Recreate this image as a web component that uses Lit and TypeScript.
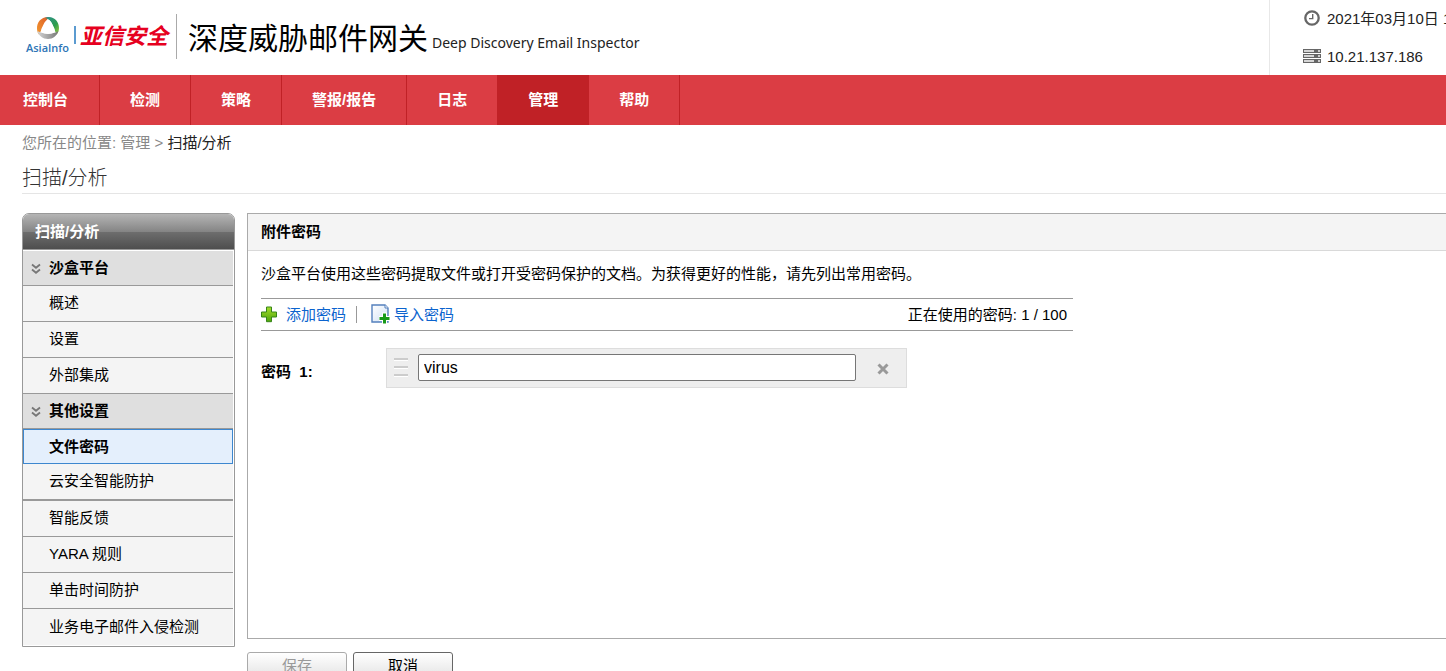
import { LitElement, html, css, svg } from "lit";
import { customElement, property, state } from "lit/decorators.js";
import { classMap } from "lit/directives/class-map.js";

const NAV = ["控制台", "检测", "策略", "警报/报告", "日志", "管理", "帮助"];

const MENU = [
  { title: "沙盒平台", items: ["概述", "设置", "外部集成"] },
  {
    title: "其他设置",
    items: ["文件密码", "云安全智能防护", "智能反馈", "YARA 规则", "单击时间防护", "业务电子邮件入侵检测"],
  },
];

@customElement("app-header")
class AppHeader extends LitElement {
  static styles = css`
    :host { display: flex; height: 75px; background: #fff; overflow: hidden; }
    .brand { display: flex; flex: 1; align-items: flex-start; padding-left: 25px; white-space: nowrap; }
    .mark { display: flex; flex-direction: column; align-items: center; width: 45px; padding-top: 16px; color: #2e75b6; font: 600 11px/16px "Open Sans", "Noto Sans", sans-serif; }
    .ring { width: 24px; height: 24px; }
    .bar { width: 2px; height: 18px; margin: 26px 4px 0 4px; background: #5b9bd0; }
    .cn { width: 89px; padding-top: 19px; color: #e60020; font: italic 700 22px/30px "Noto Sans CJK SC", sans-serif; }
    .rule { width: 1px; height: 45px; margin: 14px 11px 0 7px; background: #aaa; }
    .product { padding-top: 16px; color: #000; font: 400 30px/40px "Noto Sans CJK SC", sans-serif; }
    .en { padding: 33px 0 0 4px; color: #222; font: 400 14px/20px "Noto Sans", sans-serif; }
    .info { box-sizing: border-box; width: 177px; border-left: 1px solid #e8e8e8; padding: 8px 0 0 33px; overflow: hidden; color: #222; }
    .line { display: flex; align-items: center; height: 22px; margin-bottom: 16px; gap: 6px; white-space: nowrap; }
    .line svg { flex: none; }
  `;
  render() {
    return html`
      <div class="brand">
        <div class="mark">
          <svg class="ring" viewBox="0 0 24 24">
            <defs>
              <linearGradient id="g1" x1="1" y1="0" x2="0" y2="1"><stop offset="0" stop-color="#dc5a2a" /><stop offset="1" stop-color="#f39a2d" /></linearGradient>
              <linearGradient id="g2" x1="0" y1="0" x2="1" y2="1"><stop offset="0" stop-color="#2f8f94" /><stop offset=".6" stop-color="#2c9d4c" /><stop offset="1" stop-color="#a5cf3c" /></linearGradient>
              <linearGradient id="g3" x1="0" y1="0" x2="1" y2="0"><stop offset="0" stop-color="#d4d4d4" /><stop offset="1" stop-color="#777" /></linearGradient>
            </defs>
            <path d="M13 1C5 .5 .8 6.5 1 12.500C1 15 1.700 17 3 18.500L8 9C9.500 6 11 4 13 1Z" fill="url(#g1)" />
            <path d="M11 1.200C18 0 23 5.500 23 12C23 15 22 17 20.500 18.500L16.500 9C15 5.500 13.500 3 9 2Z" fill="url(#g2)" />
            <path d="M1.300 14.500C4 18 19 19 22.500 14.500C21 20 17 23 12 23C7 23 2.500 20 1.300 14.500Z" fill="url(#g3)" />
            <path d="M12 4C14 4 15 5.500 16.500 8.500C18 11.500 19.500 14 18.500 15.800C17.500 17.500 15 18 12 18C9 18 6.500 17.500 5.500 15.800C4.500 14 6 11.500 7.500 8.500C9 5.500 10 4 12 4Z" fill="#fff" />
          </svg>
          <span>AsiaInfo</span>
        </div>
        <span class="bar"></span>
        <span class="cn">亚信安全</span>
        <span class="rule"></span>
        <span class="product">深度威胁邮件网关</span>
        <span class="en">Deep Discovery Email Inspector</span>
      </div>
      <div class="info">
        <div class="line">
          <svg width="18" height="18" viewBox="0 0 18 18" fill="none" stroke="#666">
            <circle cx="9" cy="8" r="6.7" stroke-width="2.3" /><path d="M9.700 4v4.600H6" stroke-width="1.4" />
          </svg>
          <span>2021年03月10日 1</span>
        </div>
        <div class="line">
          <svg width="18" height="18" viewBox="0 0 18 18">
            ${[0, 5, 10].map((y) => svg`
              <rect x="0" y=${y + 1} width="18" height="4" fill="#666" />
              <rect x="1" y=${y + 2} width="10" height="2" fill="#d5d5d5" />
              <rect x="15" y=${y + 2} width="2" height="2" fill="#ccc" />`)}
          </svg>
          <span>10.21.137.186</span>
        </div>
      </div>
    `;
  }
}

@customElement("app-nav")
class AppNav extends LitElement {
  @property() active = "管理";
  static styles = css`
    nav { display: flex; height: 50px; background: #db3d44; }
    a { display: flex; align-items: center; padding: 0 30px; border-right: 1px solid #c02126; color: #fff; font-weight: 700; text-decoration: none; white-space: nowrap; }
    a:first-child { padding: 0 31px 0 23px; }
    a.on { background: #c02126; }
  `;
  render() {
    return html`<nav>
      ${NAV.map((n) => html`<a href="#" class=${classMap({ on: n === this.active })}>${n}</a>`)}
    </nav>`;
  }
}

@customElement("side-menu")
class SideMenu extends LitElement {
  @property() active = "文件密码";
  static styles = css`
    :host { display: block; }
    .box { border: 1px solid #999; border-radius: 7px 7px 0 0; overflow: hidden; }
    .head { height: 35px; padding-left: 12px; color: #fff; font-weight: 700; line-height: 35px; border-bottom: 1px solid #999; background: linear-gradient(#b5b5b5, #858585 50%, #6e6e6e 51%, #4e4e4e); }
    .list { padding: 1px 1px 1px 0; }
    .group, .item { box-sizing: border-box; display: flex; align-items: center; border-bottom: 1px solid #999; color: #000; text-decoration: none; }
    .group { height: 35px; gap: 8px; padding-left: 8px; background: #dfdfdf; font-weight: 700; }
    .item { height: 36px; padding: 0 0 1px 26px; background: #f4f4f4; }
    .item.on { height: 35px; padding: 0 0 0 25px; border: 1px solid #3d87cf; background: #e4effc; font-weight: 700; }
    .item.on + .item { height: 37px; border-bottom-width: 2px; }
    .list > :last-child { border-bottom: 0; }
  `;
  render() {
    return html`<div class="box">
      <div class="head">扫描/分析</div>
      <div class="list">
        ${MENU.map((g) => html`
          <div class="group">
            <svg width="10" height="12" viewBox="0 0 10 12" fill="none" stroke="#777" stroke-width="1.8">
              <path d="M1 2.500 5 5.800 9 2.500M1 7.500 5 10.800 9 7.500" />
            </svg>${g.title}
          </div>
          ${g.items.map((i) => html`<a href="#" class=${classMap({ item: true, on: i === this.active })}>${i}</a>`)}
        `)}
      </div>
    </div>`;
  }
}

@customElement("password-panel")
class PasswordPanel extends LitElement {
  @state() passwords = ["virus"];
  static styles = css`
    :host { display: block; }
    .panel { border: 1px solid #aaa; border-right: 0; min-height: 424px; }
    h2 { height: 36px; margin: 0; padding-left: 13px; border-bottom: 1px solid #d9d9d9; background: #f4f4f4; font-size: 15px; line-height: 36px; }
    .body { padding: 11px 13px; }
    p { margin: 0 0 13px; line-height: 23px; }
    .tools { box-sizing: border-box; display: flex; align-items: center; max-width: 812px; height: 33px; padding-right: 6px; border: solid #999; border-width: 1px 0; }
    .tools a { display: flex; align-items: center; color: #0b63ce; text-decoration: none; }
    .add { gap: 8px; }
    .split { width: 1px; height: 17px; margin: 0 14px 0 10px; background: #999; }
    .import { gap: 3px; }
    .count { margin-left: auto; }
    .row { display: flex; align-items: center; margin-top: 17px; }
    .row label { width: 125px; padding-top: 7px; font-weight: 700; white-space: pre; }
    .field { box-sizing: border-box; display: flex; align-items: center; width: 521px; height: 40px; padding: 0 16px 1px 7px; border: 1px solid #ddd; background: #eee; }
    .grip { display: flex; flex-direction: column; gap: 5px; width: 14px; margin-right: 10px; }
    .grip i { height: 2px; background: #ccc; border-bottom: 1px solid #fff; }
    input { box-sizing: border-box; flex: 1; min-width: 0; height: 27px; padding: 0 5px; border: 1px solid #767676; border-radius: 2px; background: #fff; color: #000; font: 16px "Liberation Sans", sans-serif; outline: 0; }
    .del { display: flex; margin-left: 20px; padding: 3px 1px 0; border: 0; background: none; }
    .actions { display: flex; gap: 6px; margin-top: 13px; }
    .actions button { width: 100px; height: 28px; padding: 0; border: 1px solid #666; border-radius: 3px; background: linear-gradient(#fff, #e2e2e2); color: #000; font: inherit; }
    .actions button:disabled { border-color: #aaa; color: #999; }
  `;
  render() {
    return html`
      <section class="panel">
        <h2>附件密码</h2>
        <div class="body">
          <p>沙盒平台使用这些密码提取文件或打开受密码保护的文档。为获得更好的性能，请先列出常用密码。</p>
          <div class="tools">
            <a class="add" href="#">
              <svg width="17" height="18" viewBox="0 0 17 18">
                <defs><linearGradient id="p" x1="0" y1="0" x2="0" y2="1"><stop offset="0" stop-color="#a5dc2c" /><stop offset="1" stop-color="#4fa50c" /></linearGradient></defs>
                <path d="M5.500 1h5v5h5v5h-5v4.700h-5v-4.700h-5v-5h5z" fill="url(#p)" stroke="#36851a" />
              </svg>添加密码</a>
            <span class="split"></span>
            <a class="import" href="#">
              <svg width="20" height="22" viewBox="0 0 20 22">
                <defs><linearGradient id="d" x1="0" y1="0" x2="1" y2="1"><stop offset="0" stop-color="#fff" /><stop offset="1" stop-color="#cfe0f4" /></linearGradient></defs>
                <path d="M1 1h13l3 3v14H1z" fill="url(#d)" stroke="#5480bd" stroke-width="1.4" />
                <path d="M14 1v3h3" fill="#fff" stroke="#5480bd" />
                <path d="M13.500 8.500v12M8 14.500h11" stroke="#fff" stroke-width="5" />
                <path d="M13.500 9.500v10M8.500 14.500h10" stroke="#179a17" stroke-width="3" />
              </svg>导入密码</a>
            <span class="count">正在使用的密码: ${this.passwords.length} / 100</span>
          </div>
          ${this.passwords.map((p, i) => html`
            <div class="row">
              <label for="pw${i}">密码  ${i + 1}:</label>
              <div class="field">
                <span class="grip"><i></i><i></i><i></i></span>
                <input id="pw${i}" type="text" .value=${p} />
                <button class="del" aria-label="删除">
                  <svg width="12" height="12" viewBox="0 0 12 12" stroke="#999" stroke-width="3"><path d="M1.500 1.500l9 9M10.500 1.500l-9 9" /></svg>
                </button>
              </div>
            </div>`)}
        </div>
      </section>
      <div class="actions"><button disabled>保存</button><button>取消</button></div>
    `;
  }
}

@customElement("app-root")
class AppRoot extends LitElement {
  static styles = css`
    :host { display: block; height: 100vh; overflow: hidden; background: #fff; color: #000; font: 15px/20px "Liberation Sans", "Noto Sans CJK SC", sans-serif; }
    .page { padding: 7px 0 0 22px; }
    .crumbs { color: #888; line-height: 22px; }
    .crumbs b { color: #222; font-weight: 400; }
    h1 { margin: 9px 0 19px; border-bottom: 1px solid #e5e5e5; color: #333; font-size: 20px; font-weight: 300; line-height: 30px; }
    .cols { display: grid; grid-template-columns: 213px minmax(0, 1fr); gap: 12px; align-items: start; }
  `;
  render() {
    return html`
      <app-header></app-header>
      <app-nav></app-nav>
      <main class="page">
        <div class="crumbs">您所在的位置: 管理 &gt; <b>扫描/分析</b></div>
        <h1>扫描/分析</h1>
        <div class="cols">
          <side-menu></side-menu>
          <password-panel></password-panel>
        </div>
      </main>
    `;
  }
}
